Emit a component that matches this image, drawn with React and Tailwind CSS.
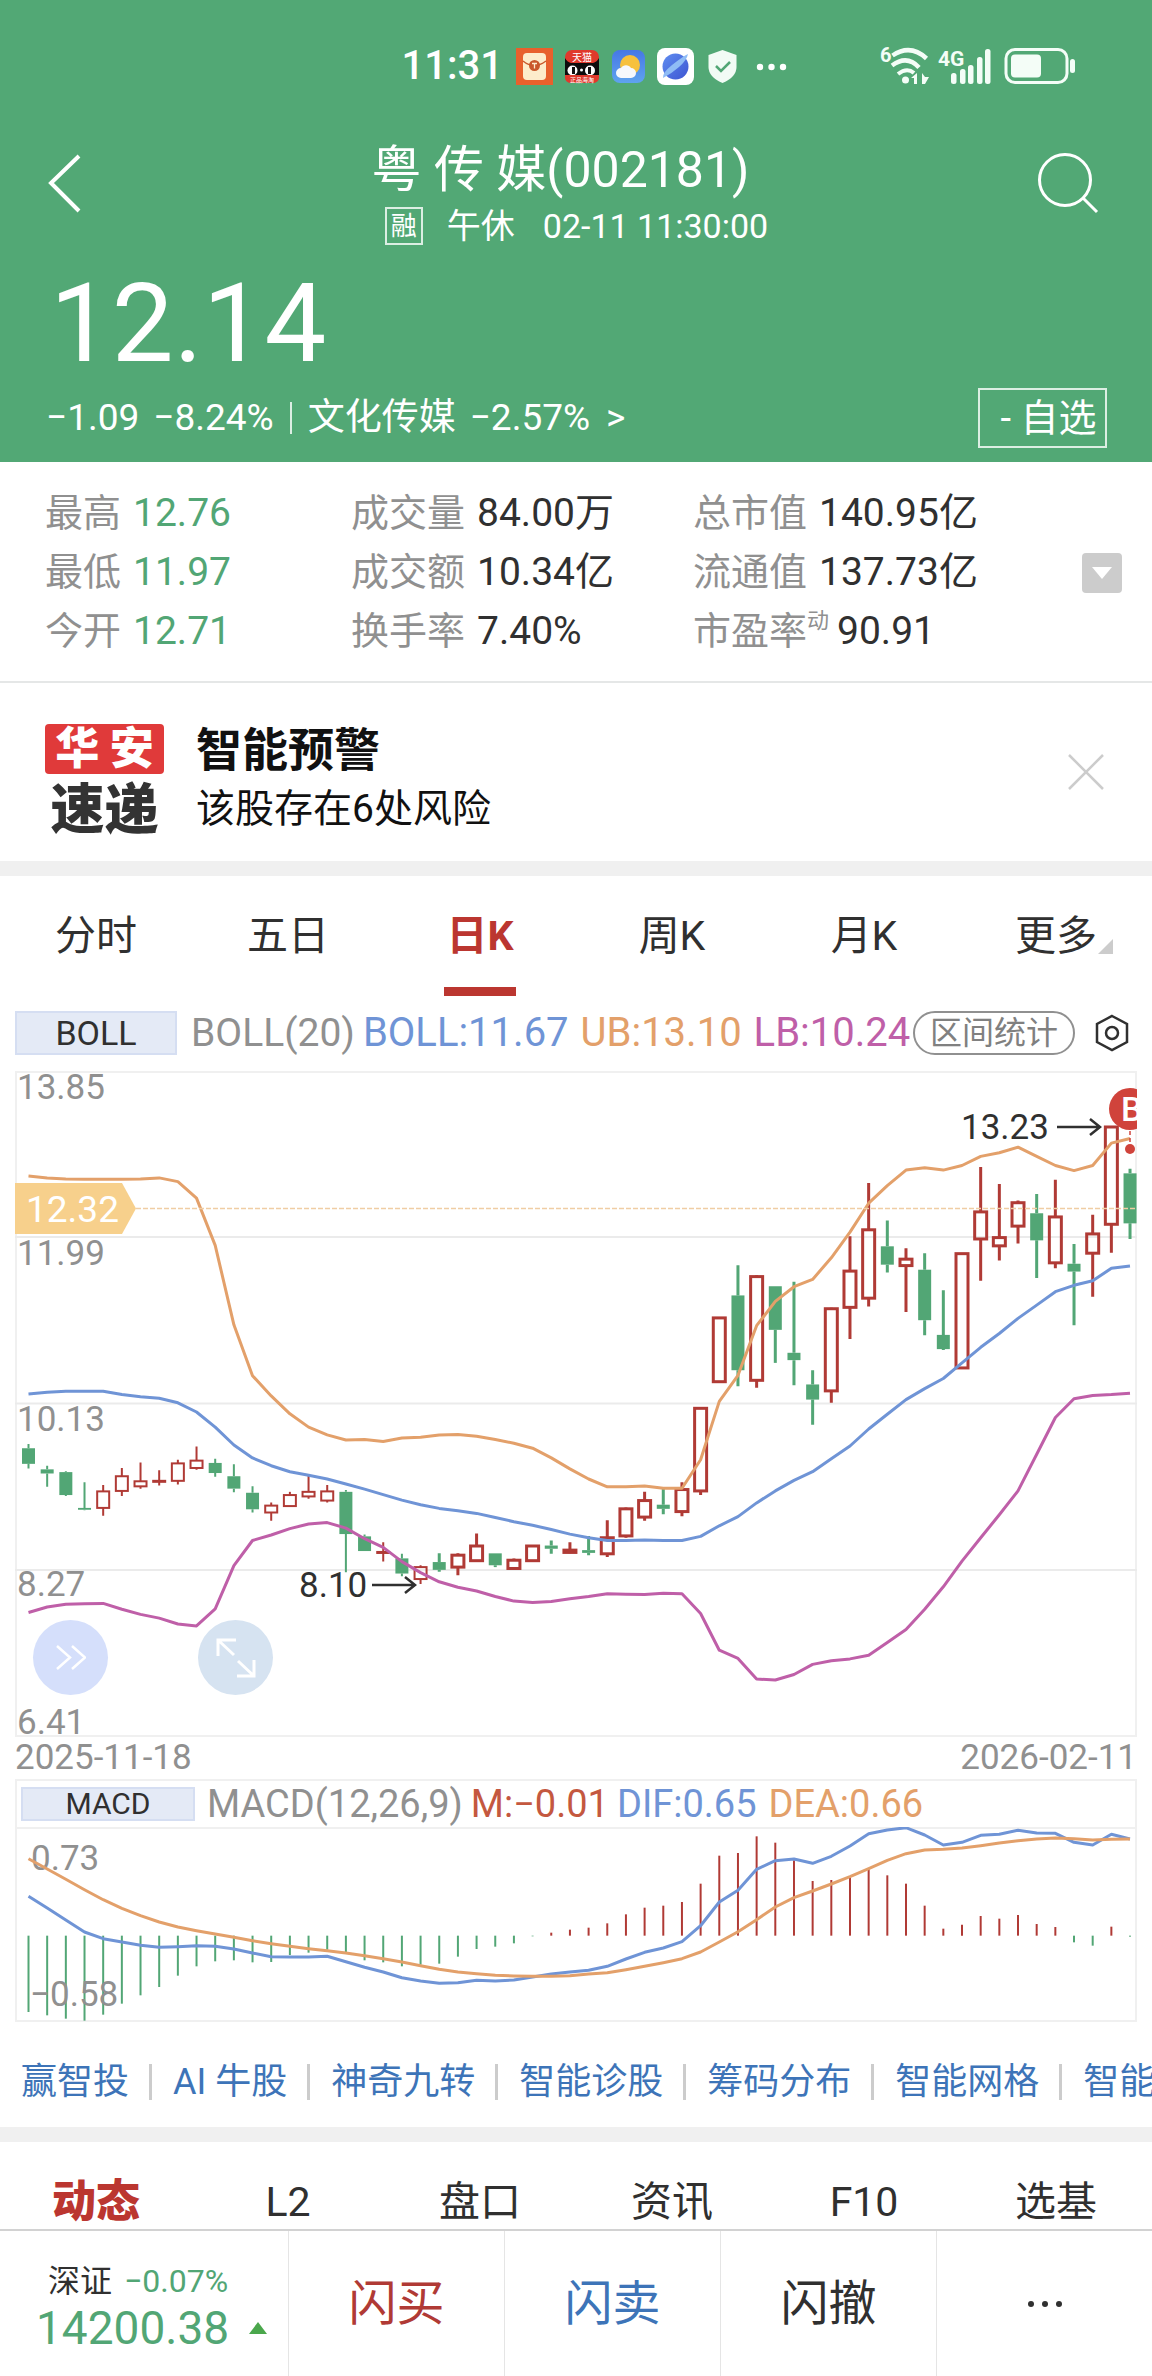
import React, { useState } from "react";
import clsx from "clsx";

const stats = [
  [
    { label: "最高", value: "12.76" },
    { label: "最低", value: "11.97" },
    { label: "今开", value: "12.71" },
  ],
  [
    { label: "成交量", value: "84.00万" },
    { label: "成交额", value: "10.34亿" },
    { label: "换手率", value: "7.40%" },
  ],
  [
    { label: "总市值", value: "140.95亿" },
    { label: "流通值", value: "137.73亿" },
    { label: "市盈率", value: "90.91", sup: "动" },
  ],
];

const periods = ["分时", "五日", "日K", "周K", "月K", "更多"];
const tools = [
  "赢智投",
  "AI 牛股",
  "神奇九转",
  "智能诊股",
  "筹码分布",
  "智能网格",
  "智能条件",
];
const sections = ["动态", "L2", "盘口", "资讯", "F10", "选基"];

// [up, bodyTop, bodyBottom, wickTop, wickBottom]
const candles = [
  [0, 847, 881, 838, 891],
  [0, 893, 902, 885, 931],
  [0, 899, 949, 897, 951],
  [0, 977, 981, 921, 982],
  [1, 941, 977, 927, 994],
  [1, 908, 940, 890, 951],
  [1, 919, 930, 878, 935],
  [1, 918, 920, 895, 928],
  [1, 880, 918, 872, 926],
  [1, 874, 890, 843, 894],
  [0, 879, 901, 870, 909],
  [0, 908, 935, 882, 943],
  [0, 944, 980, 930, 987],
  [1, 972, 987, 965, 1005],
  [1, 949, 973, 942, 973],
  [1, 942, 952, 905, 957],
  [1, 941, 961, 927, 965],
  [0, 942, 1034, 938, 1117],
  [0, 1039, 1071, 1035, 1071],
  [1, 1073, 1075, 1052, 1094],
  [0, 1087, 1120, 1077, 1126],
  [1, 1106, 1132, 1102, 1143],
  [0, 1095, 1112, 1076, 1116],
  [1, 1080, 1106, 1076, 1124],
  [1, 1060, 1092, 1033, 1094],
  [0, 1076, 1102, 1076, 1106],
  [1, 1091, 1109, 1087, 1111],
  [1, 1060, 1092, 1058, 1094],
  [0, 1059, 1066, 1048, 1077],
  [1, 1069, 1074, 1052, 1076],
  [0, 1069, 1075, 1038, 1080],
  [1, 1042, 1077, 1004, 1084],
  [1, 979, 1038, 976, 1042],
  [1, 961, 997, 942, 1005],
  [0, 970, 979, 936, 991],
  [1, 937, 985, 921, 995],
  [1, 760, 940, 757, 949],
  [1, 563, 702, 563, 702],
  [0, 514, 677, 448, 712],
  [1, 473, 699, 470, 715],
  [0, 494, 589, 494, 661],
  [0, 639, 655, 484, 710],
  [0, 708, 741, 677, 796],
  [1, 543, 722, 541, 748],
  [1, 461, 540, 385, 609],
  [1, 371, 520, 269, 538],
  [0, 407, 447, 351, 464],
  [1, 435, 449, 411, 550],
  [0, 458, 568, 422, 601],
  [0, 600, 631, 503, 633],
  [1, 423, 672, 423, 672],
  [1, 332, 391, 234, 482],
  [1, 388, 406, 271, 438],
  [1, 312, 363, 307, 401],
  [0, 335, 394, 293, 476],
  [1, 343, 443, 262, 455],
  [0, 445, 462, 402, 579],
  [1, 380, 422, 338, 517],
  [1, 147, 359, 145, 421],
  [0, 248, 357, 238, 391],
];

const upper = [
  254, 258, 260, 261, 261, 261, 260, 258, 266, 302, 405, 578, 689, 733, 772,
  801, 818, 829, 828, 832, 825, 823, 818, 817, 821, 828, 836, 847, 868, 892,
  914, 931, 931, 929, 934, 934, 872, 745, 688, 580, 527, 495, 479, 432, 376,
  313, 275, 241, 236, 241, 231, 211, 203, 191, 211, 231, 242, 231, 182, 172,
];
const middle = [
  729, 725, 723, 723, 723, 730, 735, 738, 748, 768, 801, 840, 868, 885, 898,
  906, 914, 925, 936, 948, 960, 970, 978, 983, 989, 998, 1007, 1015, 1024, 1034,
  1042, 1048, 1048, 1047, 1048, 1048, 1039, 1016, 996, 966, 940, 917, 898, 870,
  842, 805, 773, 741, 717, 695, 661, 627, 597, 564, 535, 506, 492, 482, 455,
  450,
];
const lower = [
  1205, 1193, 1187, 1186, 1185, 1198, 1209, 1217, 1230, 1234, 1197, 1103, 1048,
  1036, 1022, 1012, 1009, 1021, 1044, 1063, 1094, 1118, 1138, 1150, 1158, 1170,
  1180, 1183, 1181, 1175, 1170, 1164, 1165, 1166, 1163, 1164, 1207, 1287, 1305,
  1350, 1352, 1340, 1318, 1310, 1306, 1298, 1270, 1242, 1198, 1149, 1093, 1042,
  992, 940, 860, 780, 739, 732, 730, 727,
];

const macdBars = [
  727, 737, 747, 753, 735, 702, 677, 652, 618, 590, 575, 572, 578, 577, 556,
  549, 540, 552, 572, 578, 590, 585, 582, 561, 538, 531, 521, 500, 489, 480,
  474, 461, 434, 414, 408, 397, 342, 258, 250, 200, 219, 272, 334, 331, 321,
  296, 317, 342, 408, 477, 465, 439, 447, 436, 463, 472, 518, 528, 471, 501,
];
const dif = [
  380, 415, 451, 487, 507, 517, 527, 533, 531, 528, 530, 538, 550, 561, 562,
  562, 560, 576, 593, 607, 624, 634, 641, 639, 632, 634, 631, 622, 613, 607,
  602, 590, 568, 548, 535, 516, 468, 397, 362, 299, 273, 268, 281, 260, 229,
  192, 181, 174, 196, 226, 218, 197, 194, 182, 190, 191, 218, 226, 194, 208,
];
const dea = [
  267, 298, 329, 360, 390, 416, 438, 457, 472, 483, 493, 503, 513, 522, 530,
  537, 543, 550, 558, 567, 577, 588, 599, 607, 612, 617, 619, 620, 620, 618,
  613, 609, 600, 590, 579, 567, 547, 517, 486, 450, 412, 384, 364, 343, 321,
  297, 272, 252, 241, 239, 235, 228, 220, 213, 208, 205, 207, 211, 209, 208,
];

const RED = "#b03a35";
const GREEN = "#52a675";
const BLUE = "#6f94d6";
const ORANGE = "#e3a06a";
const PURPLE = "#bf5fa8";

const xAt = (i) => 13.5 + i * 18.67;
const priceY = (v) => ((v - 25) / 1449) * 665;
const macdY = (v) => (v - 172) / 3;
const toPoints = (values, scale) =>
  values.map((v, i) => `${xAt(i).toFixed(1)},${scale(v).toFixed(1)}`).join(" ");

const StatusBar = () => (
  <div className="flex h-10 items-center justify-end gap-[93px] pr-[76px]">
    <div className="flex items-center">
      <span className="mr-3 text-[40px] leading-10 font-medium">11:31</span>
      <svg width="272" height="40" viewBox="514 46 272 40">
        <defs>
          <linearGradient id="sky" x1="0" y1="0" x2="0" y2="1">
            <stop offset="0" stopColor="#4677e6" />
            <stop offset="1" stopColor="#5fa3ee" />
          </linearGradient>
          <linearGradient id="globe" x1="0" y1="0" x2="1" y2="1">
            <stop offset="0" stopColor="#5f8df0" />
            <stop offset="1" stopColor="#3d55d2" />
          </linearGradient>
        </defs>
        {/* red packet */}
        <rect x="515" y="48" width="37" height="37" fill="#e8602c" />
        <rect x="522" y="53" width="23" height="27" rx="4" fill="#fdeccb" />
        <path d="M522 61q11 9 23 0" fill="none" stroke="#c9582b" strokeWidth="1.5" />
        <circle cx="533.500" cy="65.500" r="5.500" fill="#c9582b" />
        <path d="M531 63.500h5M533.500 63.500v5" stroke="#fdeccb" strokeWidth="1.300" />
        {/* cat */}
        <rect x="564" y="50" width="34" height="33" rx="7" fill="#e0392c" />
        <path
          d="M564 58q2 4 6 5h22q4-1 6-5v17h-34z"
          fill="#0d0d0d"
        />
        <ellipse cx="571.500" cy="70.500" rx="5" ry="5" fill="#fff" />
        <ellipse cx="589" cy="70.500" rx="5" ry="5" fill="#fff" />
        <rect x="571" y="67" width="3" height="7" fill="#111" />
        <rect x="587" y="67" width="3" height="7" fill="#111" />
        <circle cx="580.500" cy="70" r="1.500" fill="#fff" />
        <path d="M564 75h34v2q0 6-7 6h-20q-7 0-7-6z" fill="#e0392c" />
        <text x="581" y="61" textAnchor="middle" fontSize="10" fill="#fff">
          天猫
        </text>
        <text x="581" y="82" textAnchor="middle" fontSize="6" fill="#fff">
          正品海淘
        </text>
        {/* weather */}
        <rect x="611" y="50" width="33" height="33" rx="8" fill="url(#sky)" />
        <circle cx="629" cy="65" r="10" fill="#f7c13d" />
        <path
          d="M620 78a5 5 0 0 1 0-10a6 6 0 0 1 10 0a5 5 0 0 1 0 10z"
          fill="#f6f8fc"
        />
        {/* browser */}
        <rect x="656" y="48" width="37" height="37" rx="8" fill="#fff" />
        <circle cx="674.500" cy="66.500" r="13" fill="url(#globe)" />
        <path
          d="M662 78q-1-5 9-13t16-11q-1 6-9 13t-16 11z"
          fill="#8fbcf5"
        />
        {/* shield */}
        <path
          d="M721.500 50l14 5v12q0 10-14 16q-14-6-14-16v-12z"
          fill="#f2fbf5"
        />
        <path d="M715 66l5 5l9-9" fill="none" stroke="#52a675" strokeWidth="2.500" />
        <circle cx="759" cy="67" r="3.200" fill="#fff" />
        <circle cx="770.500" cy="67" r="3.200" fill="#fff" />
        <circle cx="782" cy="67" r="3.200" fill="#fff" />
      </svg>
    </div>
    <svg width="196" height="40" viewBox="880 46 196 40" fill="#f4fdf7">
      <text x="880" y="62" fontSize="20" fontWeight="700">6</text>
      <g fill="none" stroke="#f4fdf7" strokeWidth="4.500">
        <path d="M892.500 55.500q18-12 34 3" />
        <path d="M892 65.500q15-11 27 2" />
        <path d="M898 74q9-7 16-1" strokeWidth="4" />
      </g>
      <circle cx="905.500" cy="80" r="3.500" />
      <path d="M911 78l6-5v11h-3v-6zM922 73v11h3l4-7h-4z" />
      <text x="938" y="66" fontSize="21" fontWeight="700">4G</text>
      <rect x="951" y="73" width="5.500" height="11" rx="2.500" />
      <rect x="960" y="69" width="5.500" height="15" rx="2.500" />
      <rect x="968" y="65" width="5.500" height="19" rx="2.500" />
      <rect x="977" y="57" width="5.500" height="27" rx="2.500" />
      <rect x="985" y="49" width="5.500" height="35" rx="2.500" />
      <rect x="1006" y="49.500" width="61" height="33" rx="9" fill="none" stroke="#f4fdf7" strokeWidth="3" />
      <rect x="1011" y="54.500" width="30" height="23" rx="4" />
      <rect x="1070" y="59" width="5" height="14" rx="2.500" />
    </svg>
  </div>
);

const QuoteHeader = () => (
  <header className="bg-[#52a875] pt-[46px] pb-[14px] text-white">
    <StatusBar />
    <div className="mt-[54px] flex items-start justify-between pr-[53px] pl-12">
      <button type="button" aria-label="返回" className="w-[68px] pt-3.5">
        <svg width="34" height="60" viewBox="0 0 34 60" fill="none" stroke="#fff" strokeWidth="4">
          <path d="M31 2L3 29L31 57" />
        </svg>
      </button>
      <div className="flex flex-col items-center">
        <h1 className="pr-8 text-[50px] leading-[60px]">粤 传 媒(002181)</h1>
        <div className="mt-1 flex items-center text-[34px] leading-[44px]">
          <span className="flex size-[38px] items-center justify-center border-2 border-white/80 text-[26px] leading-8">
            融
          </span>
          <span className="ml-6">午休</span>
          <span className="ml-7">02-11 11:30:00</span>
        </div>
      </div>
      <button type="button" aria-label="搜索" className="pt-3">
        <svg width="62" height="62" viewBox="0 0 62 62" fill="none" stroke="#fff" strokeWidth="3">
          <circle cx="28" cy="28" r="25.500" />
          <path d="M46 46L60 60" />
        </svg>
      </button>
    </div>
    <div className="mt-4 pl-[50px] text-[110px] leading-[120px]">12.14</div>
    <div className="mt-1 flex items-center justify-between pr-[45px] pl-[46px]">
      <a href="#sector" className="flex items-center text-[37px] leading-[44px]">
        <span>−1.09</span>
        <span className="ml-3.5">−8.24%</span>
        <span className="mx-4 h-8 w-0.5 bg-white/80" />
        <span>文化传媒</span>
        <span className="ml-3.5">−2.57%</span>
        <span className="ml-4">&gt;</span>
      </a>
      <button type="button" className="h-[60px] w-[129px] border-2 border-white/80 pl-3 text-[38px] leading-[56px] whitespace-nowrap">
        - 自选
      </button>
    </div>
  </header>
);

const StatsPanel = () => (
  <section className="flex items-center justify-between border-b-2 border-[#e5e7e7] pt-[22px] pr-[30px] pb-5 pl-[45px]">
    <div className="flex flex-1">
      {stats.map((column, c) => (
        <dl
          key={column[0].label}
          className={clsx(
            "text-[38px] leading-[59px]",
            c === 0 && "w-[306px]",
            c === 1 && "w-[342px]"
          )}
        >
          {column.map(({ label, value, sup }) => (
            <div key={label} className="flex">
              <dt className="flex text-[#909090]">
                {label}
                {sup && <span className="text-[22px] leading-[38px]">{sup}</span>}
              </dt>
              <dd
                className={clsx(
                  "text-[39px]",
                  sup ? "ml-2" : "ml-3",
                  c === 0 ? "text-[#52a675]" : "text-[#303030]"
                )}
              >
                {value}
              </dd>
            </div>
          ))}
        </dl>
      ))}
    </div>
    <button
      type="button"
      aria-label="展开"
      className="flex size-10 items-center justify-center rounded bg-[#ccc]"
    >
      <svg width="20" height="12" viewBox="0 0 20 12" fill="#fff">
        <path d="M0 0h20L10 12z" />
      </svg>
    </button>
  </section>
);

const RiskAlert = ({ onClose }) => (
  <section className="flex items-center border-b-[15px] border-[#f0f0f0] pt-10 pr-12 pb-6 pl-[45px]">
    <div className="w-[119px] text-center leading-[50px] font-black">
      <div className="flex h-[50px] items-center justify-evenly rounded bg-[#e03a3a] text-[44px] leading-[54px] text-white">
        <span>华</span>
        <span>安</span>
      </div>
      <div className="mt-3 flex h-[50px] items-center justify-center text-[54px] text-[#333]">
        速递
      </div>
    </div>
    <div className="ml-8 flex-1 text-[#111]">
      <h2 className="text-[46px] leading-[54px] font-bold">智能预警</h2>
      <p className="mt-1 text-[39px] leading-[56px]">该股存在6处风险</p>
    </div>
    <button type="button" aria-label="关闭" onClick={onClose} className="pb-4">
      <svg width="36" height="36" viewBox="0 0 36 36" stroke="#ccc" strokeWidth="2.500">
        <path d="M1 1L35 35M35 1L1 35" />
      </svg>
    </button>
  </section>
);

const PeriodTabs = ({ active, onChange }) => (
  <nav className="grid grid-cols-6">
    {periods.map((item) => (
      <button
        key={item}
        type="button"
        onClick={() => onChange(item)}
        className={clsx(
          "flex h-[120px] flex-col items-center pt-[30px] text-[41px] leading-[60px]",
          item === active ? "font-bold text-[#bb3630]" : "text-[#303030]"
        )}
      >
        <span className="relative">
          {item}
          {item === "更多" && (
            <svg className="absolute -right-4 bottom-3" width="15" height="15" fill="#ccc">
              <path d="M15 0v15H0z" />
            </svg>
          )}
        </span>
        {item === active && <span className="mt-[21px] h-[9px] w-[72px] bg-[#bb3630]" />}
      </button>
    ))}
  </nav>
);

const PriceChart = () => (
  <div className="relative">
    <svg viewBox="0 0 1122 666" className="block w-full overflow-hidden">
      <g stroke="#f0f0f0" strokeWidth="2" fill="none">
        <rect x="1" y="1" width="1120" height="664" />
        <path d="M0 166h1122M0 332.500h1122M0 499h1122" stroke="#ebebeb" />
      </g>
      <g fontSize="35" fill="#909090">
        <text x="2" y="28">13.85</text>
        <text x="2" y="194">11.99</text>
        <text x="2" y="360">10.13</text>
        <text x="2" y="525">8.27</text>
        <text x="2" y="663">6.41</text>
      </g>
      {candles.map(([up, top, bottom, wickTop, wickBottom], i) => {
        const x = xAt(i);
        const color = up ? RED : GREEN;
        const line = i < 22 ? 2 : 3;
        const y = priceY(top);
        const h = Math.max(priceY(bottom) - y, 1);
        return (
          <g key={i} stroke={color} strokeWidth={line}>
            <path d={`M${x} ${priceY(wickTop)}V${y}M${x} ${y + h}V${priceY(wickBottom)}`} />
            {up ? (
              <rect x={x - 6} y={y} width="12" height={h} fill="none" />
            ) : (
              <rect x={x - 6.5} y={y} width="13" height={h} fill={color} stroke="none" />
            )}
          </g>
        );
      })}
      <g fill="none" strokeWidth="3" strokeLinejoin="round">
        <polyline points={toPoints(upper, priceY)} stroke={ORANGE} />
        <polyline points={toPoints(middle, priceY)} stroke={BLUE} />
        <polyline points={toPoints(lower, priceY)} stroke={PURPLE} />
      </g>
      <path d="M121 137.500H1122" stroke="#f0cda4" strokeWidth="1.500" strokeDasharray="5 2" />
      <path d="M0 112h107l14 25.500l-14 25.500H0z" fill="#f7d08c" />
      <text x="11" y="151" fontSize="37" fill="#fff">12.32</text>
      <g fontSize="35" fill="#303030">
        <text x="284" y="526">8.10</text>
        <text x="946" y="68">13.23</text>
      </g>
      <g fill="none" stroke="#303030" strokeWidth="2.500">
        <path d="M357 514H400M390 506l10 8l-10 8" />
        <path d="M1042 56H1085M1075 48l10 8l-10 8" />
      </g>
      <circle cx="1115" cy="38" r="21" fill="#d0433b" />
      <text x="1106" y="50" fontSize="34" fontWeight="500" fill="#fff">B</text>
      <path d="M1115 60V74" stroke="#d0433b" strokeWidth="1.500" strokeDasharray="4 3" />
      <circle cx="1115" cy="78" r="5" fill="#d0433b" />
    </svg>
    <button
      type="button"
      aria-label="快进"
      className="absolute bottom-[42px] left-[18px] flex size-[75px] items-center justify-center rounded-full bg-[#d5dffb]"
    >
      <svg width="30" height="25" viewBox="0 0 30 25" fill="none" stroke="#fff" strokeWidth="2.500">
        <path d="M1 1L14 12.500L1 24M16 1L29 12.500L16 24" />
      </svg>
    </button>
    <button
      type="button"
      aria-label="全屏"
      className="absolute bottom-[42px] left-[183px] flex size-[75px] items-center justify-center rounded-full bg-[#d6e3f1]"
    >
      <svg width="40" height="40" viewBox="0 0 40 40" fill="none" stroke="#fff" strokeWidth="3">
        <path d="M2 18V2H20M2 2L18 17M38 22V38H21M38 38L22 23" />
      </svg>
    </button>
  </div>
);

const MacdChart = () => (
  <svg viewBox="0 0 1122 195" className="block w-full">
    <rect x="1" y="1" width="1120" height="193" fill="none" stroke="#f0f0f0" strokeWidth="2" />
    {macdBars.map((v, i) => (
      <path
        key={i}
        d={`M${xAt(i)} ${macdY(498)}V${macdY(v)}`}
        stroke={v < 498 ? RED : GREEN}
        strokeWidth="2"
      />
    ))}
    <g fontSize="35" fill="#909090">
      <text x="16" y="43">0.73</text>
      <text x="15" y="179">−0.58</text>
    </g>
    <g fill="none" strokeWidth="3" strokeLinejoin="round">
      <polyline points={toPoints(dif, macdY)} stroke={BLUE} />
      <polyline points={toPoints(dea, macdY)} stroke={ORANGE} />
    </g>
  </svg>
);

const ChartPanel = () => (
  <section className="px-[15px] pt-[15px]">
    <div className="flex h-11 items-center text-[40px] leading-[44px] whitespace-nowrap">
      <button
        type="button"
        className="h-11 w-[162px] border-2 border-[#d5def2] bg-[#e4eaf6] text-[34px] leading-10 text-[#303030]"
      >
        BOLL
      </button>
      <span className="ml-3.5 text-[39px] text-[#909090]">BOLL(20)</span>
      <span className="ml-2 text-[#6f94d6]">BOLL:11.67</span>
      <span className="ml-3 text-[#e3a06a]">UB:13.10</span>
      <span className="ml-3 text-[#bf5fa8]">LB:10.24</span>
      <button
        type="button"
        className="ml-auto h-11 w-[162px] shrink-0 rounded-full border-2 border-[#909090] text-[32px] leading-10 text-[#808080]"
      >
        区间统计
      </button>
      <button type="button" aria-label="设置" className="mr-2 ml-5">
        <svg width="34" height="38" viewBox="0 0 34 38" fill="none" stroke="#303030" strokeWidth="2.500">
          <path d="M17 2L32 10V28L17 36L2 28V10z" />
          <circle cx="17" cy="19" r="6" />
        </svg>
      </button>
    </div>
    <div className="mt-4">
      <PriceChart />
    </div>
    <div className="flex h-[42px] items-center justify-between text-[35px] leading-10 text-[#909090]">
      <span>2025-11-18</span>
      <span>2026-02-11</span>
    </div>
    <div className="flex h-12 items-center border-x-2 border-t-2 border-[#f0f0f0] pl-1 text-[38px] leading-[44px]">
      <button
        type="button"
        className="h-[34px] w-[174px] border-2 border-[#d5def2] bg-[#e4eaf6] text-[30px] leading-[30px] text-[#303030]"
      >
        MACD
      </button>
      <span className="ml-3 text-[#909090]">MACD(12,26,9)</span>
      <span className="ml-2 text-[#c4583f]">M:−0.01</span>
      <span className="ml-2 text-[#6f94d6]">DIF:0.65</span>
      <span className="ml-3 text-[#e3a06a]">DEA:0.66</span>
    </div>
    <MacdChart />
  </section>
);

const ToolLinks = () => (
  <nav className="flex overflow-hidden border-b-[15px] border-[#f0f0f0] pt-[42px] pb-[27px] pl-[21px] text-[36px] leading-9 whitespace-nowrap text-[#3d74b8]">
    {tools.map((item, i) => (
      <a
        key={item}
        href="#tools"
        className={clsx("shrink-0 pr-5", i > 0 && "border-l-[3px] border-[#ccc] pl-[21px]")}
      >
        {item}
      </a>
    ))}
  </nav>
);

const SectionTabs = ({ active, onChange }) => (
  <nav className="grid grid-cols-6 border-b-2 border-[#d2d2d2] pt-[30px]">
    {sections.map((item) => (
      <button
        key={item}
        type="button"
        onClick={() => onChange(item)}
        className={clsx(
          "h-[57px] leading-[60px]",
          item === active
            ? "text-[44px] font-black text-[#bb3630]"
            : "text-[41px] text-[#303030]"
        )}
      >
        {item}
      </button>
    ))}
  </nav>
);

const TradeBar = () => (
  <footer className="grid h-[145px] grid-cols-[4fr_3fr_3fr_3fr_3fr] text-[48px] text-[#303030]">
    <a href="#index" className="pt-7 pl-9">
      <div className="flex pl-3 text-[32px] leading-[44px]">
        <span>深证</span>
        <span className="ml-3 text-[#52a675]">−0.07%</span>
      </div>
      <div className="flex items-center text-[46px] leading-[50px] text-[#52a675]">
        14200.38
        <svg className="ml-5" width="18" height="12" fill="#4aa74c">
          <path d="M9 0L18 12H0z" />
        </svg>
      </div>
    </a>
    <button type="button" className="border-l border-[#e5e5e5] text-[#b03a35]">
      闪买
    </button>
    <button type="button" className="border-l border-[#e5e5e5] text-[#3d74b8]">
      闪卖
    </button>
    <button type="button" className="border-l border-[#e5e5e5]">
      闪撤
    </button>
    <button
      type="button"
      aria-label="更多"
      className="flex items-center justify-center border-l border-[#e5e5e5]"
    >
      <svg width="36" height="8" viewBox="0 0 36 8" fill="#303030">
        <circle cx="4" cy="4" r="3" />
        <circle cx="18" cy="4" r="3" />
        <circle cx="32" cy="4" r="3" />
      </svg>
    </button>
  </footer>
);

const App = () => {
  const [period, setPeriod] = useState("日K");
  const [section, setSection] = useState("动态");
  const [alertOpen, setAlertOpen] = useState(true);

  return (
    <div className="min-h-screen bg-white font-[Roboto,'Noto_Sans_CJK_SC',sans-serif]">
      <QuoteHeader />
      <main>
        <StatsPanel />
        {alertOpen && <RiskAlert onClose={() => setAlertOpen(false)} />}
        <PeriodTabs active={period} onChange={setPeriod} />
        <ChartPanel />
        <ToolLinks />
        <SectionTabs active={section} onChange={setSection} />
      </main>
      <TradeBar />
    </div>
  );
};

export default App;
